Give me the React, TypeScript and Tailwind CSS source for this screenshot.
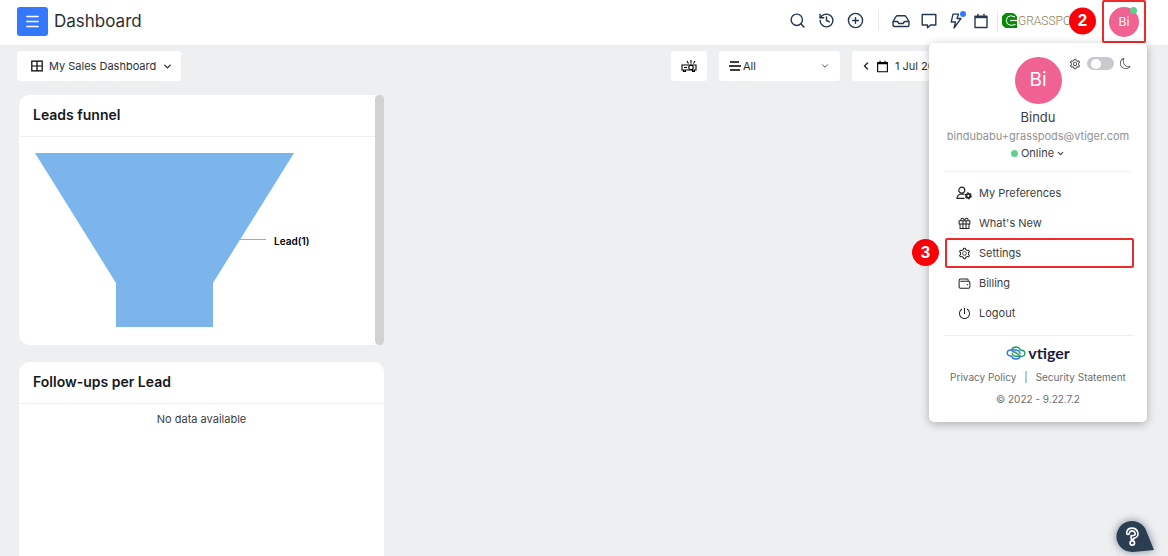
import React, { useState } from "react";
import { ChevronDown, ChevronLeft, CirclePlus, History, Menu, Search } from "lucide-react";
import { AiOutlinePoweroff, AiOutlineSetting } from "react-icons/ai";
import { BsMoon } from "react-icons/bs";

type IconProps = { className?: string };

const InboxIcon = ({ className }: IconProps) => (
  <svg viewBox="0 0 18 14" className={className} fill="none" stroke="currentColor" strokeWidth="1.4" strokeLinejoin="round">
    <path d="M1 7.5 4 2.6Q4.5 1.7 5.5 1.7H12.5Q13.5 1.7 14 2.6L17 7.5V11Q17 12.5 15.5 12.5H2.5Q1 12.5 1 11Z" />
    <path d="M1 7.5H5.5L6.8 9.5H11.2L12.5 7.5H17" />
  </svg>
);

const MessageIcon = ({ className }: IconProps) => (
  <svg viewBox="0 0 16 16" className={className} fill="none" stroke="currentColor" strokeWidth="1.4" strokeLinejoin="round">
    <path d="M1.2 1.5H14.8V12H9.5L6.5 14.8V12H1.2Z" />
  </svg>
);

const BoltIcon = ({ className }: IconProps) => (
  <svg viewBox="0 0 16 16" className={className} fill="none" stroke="currentColor" strokeWidth="1.3" strokeLinejoin="round">
    <path d="M5 1.2H10.5L9 5.5H13L6 15 7.5 9H3.2Z" />
  </svg>
);

const CalendarIcon = ({ className }: IconProps) => (
  <svg viewBox="0 0 16 16" className={className} fill="none" stroke="currentColor" strokeWidth="1.4" strokeLinejoin="round">
    <path d="M2 3.2H14V14.5H2Z" />
    <path d="M2 4.2H14" strokeWidth="2" />
    <path d="M5 .8V4M11 .8V4" />
  </svg>
);

const GridIcon = ({ className }: IconProps) => (
  <svg viewBox="0 0 12 12" className={className} fill="none" stroke="currentColor" strokeWidth="1.2">
    <path d="M.8 1.2H11.2V10.8H.8ZM6 1.2V10.8M.8 6H11.2" />
  </svg>
);

const ProjectorIcon = ({ className }: IconProps) => (
  <svg viewBox="0 0 16 14" className={className} fill="none" stroke="currentColor" strokeWidth="1.1">
    <path d="M1 6H15V11H1ZM2.500 11V12.500H4.500V11M11.500 11V12.500H13.500V11" />
    <circle cx="10" cy="8.500" r="2.200" />
    <path d="M3 8.500H6M10 4.500V1M7.500 4.500 6 2M12.500 4.500 14 2" />
  </svg>
);

const LinesIcon = ({ className }: IconProps) => (
  <svg viewBox="0 0 12 10" className={className} stroke="currentColor" strokeWidth="1.3">
    <path d="M1 1H10M0 5H12M1 9H11" />
  </svg>
);

const UserCogIcon = ({ className }: IconProps) => (
  <svg viewBox="0 0 16 14" className={className} fill="none" stroke="currentColor" strokeWidth="1.2">
    <circle cx="5.8" cy="4.2" r="3" />
    <path d="M8.500 8.300Q7.300 7.800 5.800 7.800 1.500 8 1 12.400H8.500" />
    <circle cx="12.300" cy="9.800" r="2" strokeWidth="1.800" />
    <circle cx="12.300" cy="9.800" r="3" strokeWidth="1.200" strokeDasharray="1.570 1.570" />
  </svg>
);

const GiftIcon = ({ className }: IconProps) => (
  <svg viewBox="0 0 14 14" className={className} fill="none" stroke="currentColor" strokeWidth="1.1" strokeLinejoin="round">
    <path d="M1.200 4H12.800V7.500H1.200ZM2.200 7.500V12.500H11.800V7.500M5.300 4V12.500M8.700 4V12.500" />
    <path d="M7 4Q6.500 1.300 4.700 1.300T3.200 4M7 4Q7.500 1.300 9.300 1.300T10.800 4" />
  </svg>
);

const WalletIcon = ({ className }: IconProps) => (
  <svg viewBox="0 0 14 14" className={className} fill="none" stroke="currentColor" strokeWidth="1.1" strokeLinejoin="round">
    <path d="M11 4.500V3.500Q11 2.200 9.800 2.200H2.700Q1.200 2.200 1.200 3.700V10.500Q1.200 12 2.700 12H11.300Q12.800 12 12.800 10.500V6Q12.800 4.500 11.300 4.500H2.500" />
    <path d="M10 7.500V9" />
  </svg>
);

const VtigerMark = ({ className }: IconProps) => (
  <svg viewBox="0 0 20 14" className={className} fill="none" strokeWidth="1.4" strokeLinecap="round">
    <path stroke="#22a35a" d="M5.500 4Q6.500 1 10 1T14.300 4Q18.800 4 18.800 7.300T15 10.300H9.500Q6.500 9.800 6.300 7.500" />
    <path stroke="#2f74f5" d="M14.300 10.300Q13.500 13 10 13T5.700 10.200Q1.200 10 1.200 7T5 4H10Q13.500 4.300 14 7.500" />
    <path stroke="#22a35a" d="M6.500 5.500Q10 6 13.500 9.500" />
  </svg>
);

const GrasspodsMark = ({ className }: IconProps) => (
  <svg viewBox="0 0 15 15" className={className}>
    <path fill="#078a07" d="M0 0H15V15H0Z" />
    <path fill="#fff" d="M0 0H4Q1.500 1 0 3.500ZM0 15V11.500Q1.500 14 4 15ZM15 0V3.500Q13.500 1 11 0Z" />
    <path fill="none" stroke="#fff" strokeWidth="1" d="M13 4Q8.500 1.500 5.500 4 3 7.500 5.500 11 9 13.500 13.500 11.500" />
    <path stroke="#fff" strokeWidth="1.200" d="M8 7.500H15" />
  </svg>
);

const Badge = ({ children }: { children: React.ReactNode }) => (
  <span className="flex size-[27px] items-center justify-center rounded-full bg-[#fb0007] font-['Liberation_Sans'] text-[17px] font-bold text-white">
    {children}
  </span>
);

const menuItems = [
  { label: "My Preferences", icon: <UserCogIcon className="h-[14px] w-4" /> },
  { label: "What's New", icon: <GiftIcon className="size-[13px]" /> },
  { label: "Settings", icon: <AiOutlineSetting size={13} />, step: 3 },
  { label: "Billing", icon: <WalletIcon className="size-[13px]" /> },
  { label: "Logout", icon: <AiOutlinePoweroff size={13} /> },
];

const IconButton = ({ label, className, children }: { label: string; className: string; children: React.ReactNode }) => (
  <button aria-label={label} className={`relative flex h-8 items-center justify-center ${className}`}>
    {children}
  </button>
);

const Header = () => (
  <header className="flex h-[45px] shrink-0 items-center bg-white pl-[17px] pr-[22px] text-[#26384d]">
    <button aria-label="Menu" className="mb-[2px] flex h-[29px] w-[31px] items-center justify-center rounded-[3px] bg-[#3478ff] text-white">
      <Menu size={17} strokeWidth={2} />
    </button>
    <h1 className="mb-[2px] ml-[6px] text-[17px] text-[#2c2f33]">Dashboard</h1>

    <div className="mb-1 ml-auto flex items-center">
      <IconButton label="Search" className="w-[29px]"><Search size={17} strokeWidth={2} /></IconButton>
      <IconButton label="History" className="w-[29px]"><History size={17} strokeWidth={2} /></IconButton>
      <IconButton label="Add" className="w-[29px]"><CirclePlus size={17} strokeWidth={2} /></IconButton>
      <span className="mx-2 h-5 w-px bg-[#e6e8ea]" />
      <IconButton label="Inbox" className="w-[27px]"><InboxIcon className="h-[14px] w-[18px]" /></IconButton>
      <IconButton label="Messages" className="w-[29px]"><MessageIcon className="size-4" /></IconButton>
      <IconButton label="Actions" className="w-[25px]">
        <BoltIcon className="size-4" />
        <span className="absolute right-[2px] top-[6px] size-[6px] rounded-full bg-[#3478ff]" />
      </IconButton>
      <IconButton label="Calendar" className="w-[25px]"><CalendarIcon className="size-4" /></IconButton>
      <span className="mx-1 h-5 w-px bg-[#e6e8ea]" />
      <div className="relative flex w-[100px] items-center">
        <GrasspodsMark className="size-[15px]" />
        <span className="ml-px font-['Roboto'] text-xs font-light text-[#8b8160]">GRASSPO</span>
        <span className="absolute right-[6px] top-1/2 -translate-y-1/2"><Badge>2</Badge></span>
      </div>
    </div>
    <button className="mb-[2px] flex h-[43px] w-11 items-center justify-center rounded-[2px] border-2 border-[#ee2b2b]">
      <span className="relative flex size-[30px] items-center justify-center rounded-full bg-[#f06292] text-xs text-white">
        Bi
        <span className="absolute right-[2px] top-0 size-[7px] rounded-full bg-[#5ed08d]" />
      </span>
    </button>
  </header>
);

const Toolbar = () => (
  <div className="flex h-[30px] items-center gap-3 pl-[17px] pr-[21px] text-[11px] text-[#2c2f33]">
    <button className="mr-auto flex h-full items-center rounded-[3px] bg-white pl-[14px] pr-2">
      <GridIcon className="size-3 text-black" />
      <span className="mx-[6px]">My Sales Dashboard</span>
      <ChevronDown size={11} strokeWidth={3} />
    </button>
    <button aria-label="Presentation view" className="flex h-full w-9 items-center justify-center rounded-[3px] bg-white text-black">
      <ProjectorIcon className="h-[14px] w-4" />
    </button>
    <label className="flex h-full w-[121px] items-center rounded-[3px] bg-white px-[10px]">
      <LinesIcon className="h-[10px] w-3 shrink-0 text-black" />
      <select aria-label="Filter" className="ml-[2px] min-w-0 flex-1 appearance-none bg-transparent outline-none">
        <option>All</option>
      </select>
      <ChevronDown size={10} />
    </label>
    <div className="flex h-full w-[295px] items-center overflow-hidden rounded-[3px] border-r-[30px] border-[#3478ff] bg-white pl-2">
      <button aria-label="Previous"><ChevronLeft size={12} strokeWidth={3} /></button>
      <CalendarIcon className="ml-1 mr-[6px] size-[13px] text-black" />
      <span>1 Jul 2022</span>
    </div>
  </div>
);

const FunnelChart = () => (
  <svg viewBox="0 0 356 208" className="h-[208px] w-[356px]" role="img" aria-label="Leads funnel">
    <path fill="#7cb5ec" d="M16 16H275L194 146V190H97V146Z" />
    <path stroke="#7cb5ec" d="M221 102.500H247" />
    <text x="255" y="108" className="fill-black text-[10px] font-semibold">Lead(1)</text>
  </svg>
);

const UserMenu = () => {
  const [dark, setDark] = useState(false);

  return (
    <aside className="absolute right-[21px] top-[43px] z-10 h-[379px] w-[218px] rounded-[5px] bg-white px-4 text-[#3b3e42] shadow-[0_2px_10px_rgba(0,0,0,0.28)]">
      <div className="absolute right-4 top-[14px] flex items-center gap-[6px]">
        <AiOutlineSetting size={12} />
        <input
          type="checkbox"
          role="switch"
          aria-label="Dark mode"
          checked={dark}
          onChange={(e) => setDark(e.target.checked)}
          className="flex h-[13px] w-[27px] appearance-none items-center rounded-full bg-[#c9cace] px-1 before:size-[10px] before:rounded-full before:bg-white checked:justify-end"
        />
        <BsMoon size={11} />
      </div>

      <div className="flex flex-col items-center border-b border-[#f0f0f1] pb-[10px] pt-[14px]">
        <div className="flex size-[47px] items-center justify-center rounded-full bg-[#f06292] text-[19px] text-white">Bi</div>
        <p className="mt-1 text-[13px] leading-[18px]">Bindu</p>
        <p className="mt-[1px] text-[11px] leading-[18px] text-[#909296]">bindubabu+grasspods@vtiger.com</p>
        <button className="flex items-center text-[11px] leading-4">
          <span className="mr-[3px] size-[7px] rounded-full bg-[#5ed08d]" />
          Online
          <ChevronDown size={9} strokeWidth={3} className="ml-[2px]" />
        </button>
      </div>

      <ul className="-mr-[3px] border-b border-[#f0f0f1] pb-[7px] pt-[6px]">
        {menuItems.map(({ label, icon, step }) => (
          <li key={label} className="relative">
            {step && <span className="absolute right-full top-[1px] mr-[6px]"><Badge>{step}</Badge></span>}
            <a
              href="#"
              className={`flex h-[30px] items-center rounded-[2px] border-2 text-[11px] ${step ? "border-[#ee2b2b]" : "border-transparent"}`}
            >
              <span className="ml-[9px] mr-[7px] flex w-4 justify-center text-[#222]">{icon}</span>
              {label}
            </a>
          </li>
        ))}
      </ul>

      <footer className="flex flex-col items-center text-[10px] text-[#6c6e72]">
        <div className="mt-[6px] flex items-center font-['Lato'] text-base leading-[22px] font-bold text-[#211c3b]">
          <VtigerMark className="mr-[2px] h-[14px] w-5" />
          vtiger
        </div>
        <div className="mt-[5px] flex leading-4">
          <a href="#">Privacy Policy</a>
          <span className="mx-2">|</span>
          <a href="#">Security Statement</a>
        </div>
        <p className="mt-[6px] leading-4">© 2022 - 9.22.7.2</p>
      </footer>
    </aside>
  );
};

const App = () => {
  return (
    <div className="relative flex h-screen flex-col overflow-hidden bg-[#eeeff1] font-['Inter',sans-serif]">
      <Header />
      <main className="flex min-h-0 flex-1 flex-col pt-[6px]">
        <Toolbar />
        <div className="ml-[19px] mt-[14px] flex min-h-0 w-[365px] flex-1 flex-col gap-[17px]">
          <section className="flex h-[250px] shrink-0 rounded-[10px] bg-white">
            <div className="min-w-0 flex-1">
              <h2 className="h-[42px] border-b border-[#f0f0f1] px-[14px] text-[14px] leading-[40px] font-semibold text-[#15181b]">Leads funnel</h2>
              <FunnelChart />
            </div>
            <div className="h-full w-[9px] rounded-full bg-[#d2d2d3]" />
          </section>
          <section className="min-h-0 flex-1 overflow-hidden rounded-t-[10px] bg-white">
            <h2 className="h-[42px] border-b border-[#f0f0f1] px-[14px] text-[14px] leading-[40px] font-semibold text-[#15181b]">Follow-ups per Lead</h2>
            <p className="mt-[6px] text-center text-[11px] leading-[18px] text-[#3b3e42]">No data available</p>
          </section>
        </div>
      </main>

      <UserMenu />

      <button aria-label="Help" className="absolute bottom-0 right-3 z-20 h-9 w-10">
        <svg viewBox="0 0 40 36" className="h-9 w-10 overflow-visible drop-shadow-[0_0_4px_rgba(40,60,90,0.6)]">
          <path fill="#2b3e51" d="M29.500 9 38 30 17 32A15.500 15.500 0 1 1 29.500 9Z" />
          <path fill="none" stroke="#fff" strokeWidth="4.400" strokeLinecap="round" d="M12 13Q12.500 9.500 16 9.500T20.500 13 16.500 17V18.500" />
          <path fill="none" stroke="#2b3e51" strokeWidth="1.200" strokeLinecap="round" d="M12 13Q12.500 9.500 16 9.500T20.500 13 16.500 17V18" />
          <circle cx="16.300" cy="23" r="2.200" fill="#2b3e51" stroke="#fff" strokeWidth="1.700" />
        </svg>
      </button>
    </div>
  );
};

export default App;
